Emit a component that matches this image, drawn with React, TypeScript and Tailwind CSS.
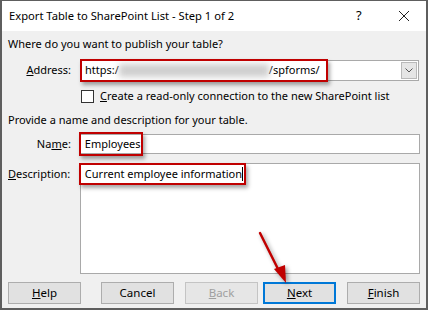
import React from "react";

const font = { fontFamily: '"Noto Sans", "Open Sans", sans-serif' };

const RedBox = ({ className = "" }: { className?: string }) => (
  <div
    className={`absolute border-2 border-[#c00000] shadow-[2px_3px_4px_rgba(0,0,0,0.35)] ${className}`}
  />
);

const Btn = ({
  children,
  primary,
  disabled,
}: {
  children: React.ReactNode;
  primary?: boolean;
  disabled?: boolean;
}) => (
  <div
    className={`w-[73px] h-[22px] flex items-center justify-center text-[11.5px] ${
      primary ? "border-2 border-[#0078d7] bg-[#e1e1e1]" : "border border-[#adadad] bg-[#e1e1e1]"
    } ${disabled ? "text-[#a0a0a0] !border-[#c4c4c4] !bg-[#e6e6e6]" : "text-black"}`}
  >
    {children}
  </div>
);

export default function App() {
  return (
    <div className="w-[428px] h-[310px] bg-white" style={font}>
      <div className="relative w-[428px] h-[310px] border-t border-x-2 border-b-2 border-[#5e5e5e] bg-[#f0f0f0] flex flex-col">
        {/* title bar */}
        <div className="h-[30px] bg-white flex items-center pl-[7px] text-[11.2px] text-black">
          <span className="flex-1">Export Table to SharePoint List - Step 1 of 2</span>
          <span className="w-[12px] text-[13px] mr-[30px]">?</span>
          <svg width="12" height="12" viewBox="0 0 12 12" className="mr-[16px]">
            <path d="M1 1 L11 11 M11 1 L1 11" stroke="#222" strokeWidth="1" />
          </svg>
        </div>

        <div className="flex-1 px-[6px] text-[11px] text-black">
          <div className="mt-[5px] h-[16px] leading-[16px]">Where do you want to publish your table?</div>

          {/* address */}
          <div className="mt-[7px] flex items-center h-[22px]">
            <div className="w-[64px] text-right pr-[1px]">
              <u>A</u>ddress:
            </div>
            <div className="relative ml-[8px] w-[339px] h-[21px] bg-white border border-[#a9a9a9] flex items-center">
              <span className="pl-[4px]">https:/</span>
              <span className="inline-block w-[150px] h-[13px] bg-[#cfcfcf] blur-[3px]" />
              <span>/spforms/</span>
              <div className="absolute right-[1px] top-[1px] w-[16px] h-[17px] bg-[#e5e5e5] border border-[#b9b9b9] flex items-center justify-center">
                <svg width="8" height="5" viewBox="0 0 8 5">
                  <path d="M0.5 0.5 L4 4 L7.5 0.5" stroke="#555" strokeWidth="1" fill="none" />
                </svg>
              </div>
              <RedBox className="-left-[1px] -top-[2px] w-[248px] h-[23px]" />
            </div>
          </div>

          {/* checkbox */}
          <div className="mt-[8px] ml-[73px] flex items-center h-[14px]">
            <div className="w-[13px] h-[13px] bg-white border border-[#333]" />
            <span className="ml-[6px]">
              <u>C</u>reate a read-only connection to the new SharePoint list
            </span>
          </div>

          <div className="mt-[9px] h-[16px] leading-[16px]">Provide a name and description for your table.</div>

          {/* name */}
          <div className="mt-[6px] flex items-center h-[20px]">
            <div className="w-[64px] text-right pr-[1px]">
              Na<u>m</u>e:
            </div>
            <div className="relative ml-[8px] w-[341px] h-[20px] bg-white border border-[#a9a9a9] flex items-center">
              <span className="pl-[4px]">Employees</span>
              <RedBox className="-left-[2px] -top-[3px] w-[64px] h-[24px]" />
            </div>
          </div>

          {/* description */}
          <div className="mt-[9px] flex items-start">
            <div className="w-[64px] pt-[3px]">
              <u>D</u>escription:
            </div>
            <div className="relative ml-[8px] w-[341px] h-[111px] bg-white border border-[#a9a9a9]">
              <div className="pl-[4px] pt-[2px] flex items-center">
                <span>Current employee information</span>
                <span className="inline-block w-px h-[14px] bg-black" />
              </div>
              <RedBox className="-left-[2px] -top-[1px] w-[167px] h-[22px]" />
            </div>
          </div>

          {/* buttons */}
          <div className="mt-[8px] flex items-center">
            <Btn>
              <u>H</u>elp
            </Btn>
            <div className="ml-[20px]">
              <Btn>Cancel</Btn>
            </div>
            <div className="ml-[11px]">
              <Btn disabled>
                <u>B</u>ack
              </Btn>
            </div>
            <div className="ml-[5px]">
              <Btn primary>
                <u>N</u>ext
              </Btn>
            </div>
            <div className="ml-[11px]">
              <Btn>
                <u>F</u>inish
              </Btn>
            </div>
          </div>
        </div>

        {/* arrow */}
        <svg
          className="absolute left-[250px] top-[228px] pointer-events-none"
          width="50"
          height="60"
          viewBox="0 0 50 60"
          style={{ filter: "drop-shadow(2px 2px 2px rgba(0,0,0,0.4))" }}
        >
          <path d="M8 4 L27 42" stroke="#c00000" strokeWidth="2.5" strokeLinecap="round" />
          <path d="M22 40 L34 54 L33 36 Z" fill="#c00000" />
        </svg>
      </div>
    </div>
  );
}
